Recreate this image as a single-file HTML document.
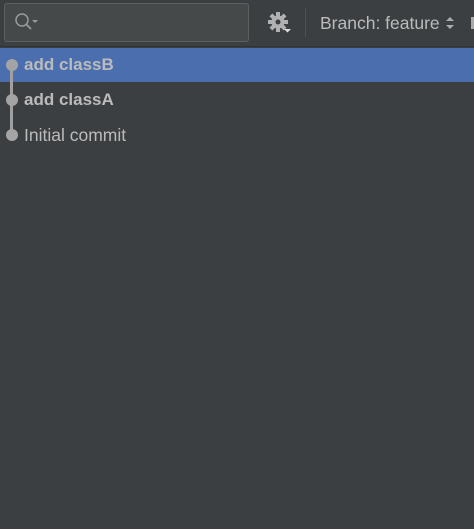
<html><body style="margin:0;width:474px;height:529px;background:#3c3f41;overflow:hidden;font-family:'Liberation Sans',sans-serif;color:#bbbbbb;position:relative">
<div style="position:absolute;left:0;top:0;width:474px;height:46px;background:#3c3f41;border-bottom:1px solid #323232"></div>
<div style="position:absolute;left:4px;top:3px;width:243px;height:37px;background:#45494a;border:1px solid #5e6060;border-radius:3px"></div>
<svg style="position:absolute;left:14px;top:12px" width="28" height="22"><circle cx="8" cy="8" r="6" fill="none" stroke="#9a9a9a" stroke-width="1.5"/><line x1="12" y1="12" x2="17" y2="17" stroke="#9a9a9a" stroke-width="1.8"/><path d="M18 8h6l-3 3z" fill="#9a9a9a"/></svg>
<svg style="position:absolute;left:267px;top:12px" width="26" height="22"><g transform="translate(11,10)" fill="#afb1b3"><circle r="6.5"/><g><rect x="-2" y="-10" width="4" height="20"/><rect x="-10" y="-2" width="20" height="4"/><rect x="-2" y="-10" width="4" height="20" transform="rotate(45)"/><rect x="-2" y="-10" width="4" height="20" transform="rotate(-45)"/></g><circle r="2.5" fill="#3c3f41"/></g><path d="M17 17h7l-3.5 3.5z" fill="#dddddd"/></svg>
<div style="position:absolute;left:305px;top:8px;width:1px;height:29px;background:#515151"></div>
<div style="position:absolute;left:320px;top:13px;font-size:17.5px;white-space:nowrap">Branch: feature</div>
<svg style="position:absolute;left:445px;top:15px" width="10" height="16"><path d="M1 6l4-4 4 4zM1 10l4 4 4-4z" fill="#aaa"/></svg>
<div style="position:absolute;left:471px;top:17px;width:3px;height:12px;background:#aaa"></div>
<div style="position:absolute;left:0;top:48px;width:474px;height:34px;background:#4b6eaf"></div>
<div style="position:absolute;left:10px;top:65px;width:3px;height:70px;background:#a0a0a0"></div>
<div style="position:absolute;left:6px;top:59px;width:12px;height:12px;border-radius:50%;background:#a4a4a4"></div>
<div style="position:absolute;left:6px;top:94px;width:12px;height:12px;border-radius:50%;background:#a4a4a4"></div>
<div style="position:absolute;left:6px;top:129px;width:12px;height:12px;border-radius:50%;background:#a4a4a4"></div>
<div style="position:absolute;left:24px;top:55px;font-size:17px;font-weight:bold">add classB</div>
<div style="position:absolute;left:24px;top:90px;font-size:17px;font-weight:bold">add classA</div>
<div style="position:absolute;left:24px;top:125px;font-size:17.5px">Initial commit</div>
</body></html>
